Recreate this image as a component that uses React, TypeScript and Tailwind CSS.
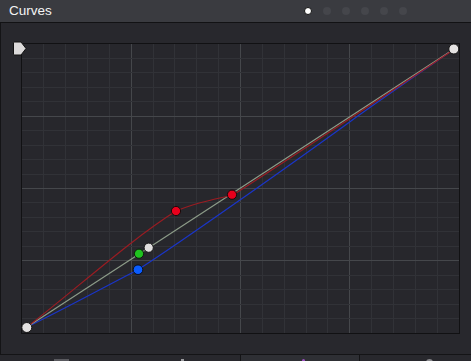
import React from 'react';

const App: React.FC = () => {
  const cols = Array.from({ length: 19 }, (_, i) => 22 + (i + 1) * (437 / 20));
  const rows = Array.from({ length: 19 }, (_, i) => 44 + (i + 1) * (289 / 20));
  const pages = [0, 1, 2, 3, 4, 5];

  return (
    <div className="w-[471px] h-[361px] bg-[#28282d] overflow-hidden flex flex-col" style={{ fontFamily: '"Liberation Sans", Arial, sans-serif' }}>
      {/* header */}
      <div className="h-[23px] shrink-0 bg-[#3a3b40] border-b border-[#121214] flex items-center relative">
        <span className="pl-[9px] text-[13.5px] text-[#f4f4f4] leading-none">Curves</span>
        <div className="absolute left-[304px] top-[7px] flex gap-[11px]">
          {pages.map((p) => (
            <span
              key={p}
              className={p === 0 ? 'w-[8px] h-[8px] rounded-full bg-white border border-[#111]' : 'w-[8px] h-[8px] rounded-full bg-[#45464b]'}
            />
          ))}
        </div>
      </div>

      {/* curve panel */}
      <div className="h-[332px] shrink-0 border-l border-b border-[#141416] relative pl-[20px] pt-[20px]">
        <div className="relative w-[439px] h-[291px] border border-[#111113] bg-[#27272c]">
          <svg className="absolute left-0 top-0 overflow-visible" width="437" height="289" viewBox="22 44 437 289">
            {cols.map((x, i) => (
              <line key={'c' + i} x1={x} y1={44} x2={x} y2={333} stroke={i % 5 === 4 ? '#45474b' : '#313237'} strokeWidth="1" shapeRendering="crispEdges" />
            ))}
            {rows.map((y, i) => (
              <line key={'r' + i} x1={22} y1={y} x2={459} y2={y} stroke={i % 5 === 4 ? '#45474b' : '#313237'} strokeWidth="1" shapeRendering="crispEdges" />
            ))}

            {/* blue */}
            <path d="M27,327 C70,306 110,284 138,269.7 C180,243 300,158 350,121.7 C390,93 430,66 454,49" fill="none" stroke="#1a35c8" strokeWidth="1.2" />
            {/* luma / green */}
            <path d="M27,327 L454,49" fill="none" stroke="#8c9b88" strokeWidth="1.2" />
            {/* red */}
            <path d="M27,327 C75,290 130,240 176,211 C195,203 214,199 232,195.5 C300,152 390,92 454,49.5" fill="none" stroke="#9a1c22" strokeWidth="1.2" />

            <circle cx="176" cy="211" r="4.6" fill="#e8001c" stroke="#1a0a0a" strokeWidth="1" />
            <circle cx="232" cy="194.7" r="4.6" fill="#e8001c" stroke="#1a0a0a" strokeWidth="1" />
            <circle cx="139" cy="253.7" r="4.6" fill="#1fc21f" stroke="#0c1a0c" strokeWidth="1" />
            <circle cx="148.7" cy="247.7" r="4.6" fill="#e0dede" stroke="#151515" strokeWidth="1" />
            <circle cx="138" cy="269.7" r="4.8" fill="#0a5cff" stroke="#0a0f1f" strokeWidth="1" />
            <circle cx="26.8" cy="327.5" r="5" fill="#e4e2e2" stroke="#151515" strokeWidth="1" />
            <circle cx="453.8" cy="49" r="5" fill="#e4e2e2" stroke="#151515" strokeWidth="1" />
          </svg>
        </div>
        <svg className="absolute left-[11px] top-[18px]" width="16" height="16" viewBox="0 0 16 16">
          <path d="M2.5,1 H9 L14,7.5 L9,14 H2.5 Q1.5,14 1.5,13 V2 Q1.5,1 2.5,1 Z" fill="#dcdada" stroke="#111" strokeWidth="1" />
        </svg>
      </div>

      {/* bottom tabs */}
      <div className="flex-1 flex">
        <div className="w-[241px] border-r border-[#141416] relative">
          <span className="absolute left-[54px] top-[4px] w-[15px] h-[4px] bg-[#5a5a5f]" />
          <span className="absolute left-[181px] top-[4px] w-[3px] h-[4px] bg-[#9a9a9e]" />
        </div>
        <div className="w-[119px] border-r border-[#141416] bg-[#2e2f34] relative">
          <span className="absolute left-[61px] top-[4px] w-[3px] h-[4px] rounded-t-full bg-[#9b4fc0]" />
        </div>
        <div className="flex-1 relative">
          <span className="absolute left-[66px] top-[4px] w-[7px] h-[4px] rounded-t-full bg-[#8a8a8e]" />
        </div>
      </div>
    </div>
  );
};

export default App;
